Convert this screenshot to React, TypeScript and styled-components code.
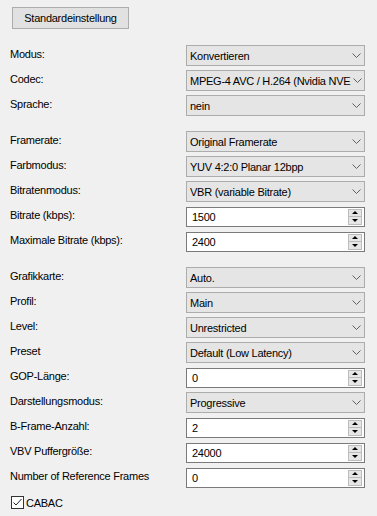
import React from "react";
import styled, { createGlobalStyle } from "styled-components";

const GlobalStyle = createGlobalStyle`
  html, body {
    margin: 0;
    padding: 0;
    background: #f0f0f0;
  }
  body {
    font-family: "Liberation Sans", Arial, sans-serif;
    font-size: 11px;
    letter-spacing: -0.25px;
    color: #000;
  }
`;

const Panel = styled.div`
  width: 377px;
  height: 516px;
  box-sizing: border-box;
  padding: 7px 12px 0 10px;
  overflow: hidden;
`;

const ResetButton = styled.button`
  margin-left: 2px;
  width: 117px;
  height: 22px;
  background: #e1e1e1;
  border: 1px solid #adadad;
  border-radius: 0;
  font: inherit;
  letter-spacing: inherit;
  color: #000;
  padding: 0;
`;

const Group = styled.div<{ $gap?: number }>`
  display: grid;
  grid-template-columns: 176px 179px;
  grid-auto-rows: 25px;
  margin-top: ${(p) => p.$gap ?? 11}px;
`;

const Label = styled.div`
  align-self: start;
  padding-top: 5px;
  white-space: nowrap;
`;

const Combo = styled.div`
  align-self: center;
  height: 21px;
  box-sizing: border-box;
  background: #e5e5e5;
  border: 1px solid #acacac;
  display: flex;
  align-items: center;
  padding: 0 0 0 3px;
  overflow: hidden;
`;

const ComboText = styled.span`
  flex: 1;
  white-space: nowrap;
`;

const Chevron = styled.svg`
  flex: none;
  width: 9px;
  height: 5px;
  margin: 0 3px 0 3px;
`;

const SpinBox = styled.div`
  align-self: center;
  height: 20px;
  box-sizing: border-box;
  background: #fff;
  border: 1px solid #7a7a7a;
  display: flex;
  align-items: stretch;
  padding: 1px 2px 1px 5px;
`;

const SpinValue = styled.span`
  flex: 1;
  display: flex;
  align-items: center;
`;

const SpinButtons = styled.div`
  width: 14px;
  display: flex;
  flex-direction: column;
`;

const SpinButton = styled.div`
  flex: 1;
  box-sizing: border-box;
  background: #e6e6e6;
  border: 1px solid #bcbcbc;
  display: flex;
  align-items: center;
  justify-content: center;
  & + & {
    border-top: none;
  }
`;

const Arrow = styled.div<{ $down?: boolean }>`
  width: 0;
  height: 0;
  border-left: 3px solid transparent;
  border-right: 3px solid transparent;
  ${(p) => (p.$down ? "border-top: 3px solid #000;" : "border-bottom: 3px solid #000;")}
`;

const CheckRow = styled.label`
  grid-column: 1 / span 2;
  display: flex;
  align-items: center;
  gap: 2px;
  padding-left: 1px;
`;

const CheckBox = styled.span`
  width: 13px;
  height: 13px;
  box-sizing: border-box;
  border: 1px solid #333;
  background: #fff;
  display: flex;
  align-items: center;
  justify-content: center;
`;

const Dropdown = ({ label, value }: { label: string; value: string }) => (
  <>
    <Label>{label}</Label>
    <Combo>
      <ComboText>{value}</ComboText>
      <Chevron viewBox="0 0 9 5">
        <path d="M0.5 0.5 L4.5 4.5 L8.5 0.5" fill="none" stroke="#606060" strokeWidth="1" />
      </Chevron>
    </Combo>
  </>
);

const Spinner = ({ label, value }: { label: string; value: string }) => (
  <>
    <Label>{label}</Label>
    <SpinBox>
      <SpinValue>{value}</SpinValue>
      <SpinButtons>
        <SpinButton>
          <Arrow />
        </SpinButton>
        <SpinButton>
          <Arrow $down />
        </SpinButton>
      </SpinButtons>
    </SpinBox>
  </>
);

export default function App() {
  return (
    <>
      <GlobalStyle />
      <Panel>
        <ResetButton>Standardeinstellung</ResetButton>
        <Group $gap={14}>
          <Dropdown label="Modus:" value="Konvertieren" />
          <Dropdown label="Codec:" value="MPEG-4 AVC / H.264 (Nvidia NVE" />
          <Dropdown label="Sprache:" value="nein" />
        </Group>
        <Group>
          <Dropdown label="Framerate:" value="Original Framerate" />
          <Dropdown label="Farbmodus:" value="YUV 4:2:0 Planar 12bpp" />
          <Dropdown label="Bitratenmodus:" value="VBR (variable Bitrate)" />
          <Spinner label="Bitrate (kbps):" value="1500" />
          <Spinner label="Maximale Bitrate (kbps):" value="2400" />
        </Group>
        <Group>
          <Dropdown label="Grafikkarte:" value="Auto." />
          <Dropdown label="Profil:" value="Main" />
          <Dropdown label="Level:" value="Unrestricted" />
          <Dropdown label="Preset" value="Default (Low Latency)" />
          <Spinner label="GOP-Länge:" value="0" />
          <Dropdown label="Darstellungsmodus:" value="Progressive" />
          <Spinner label="B-Frame-Anzahl:" value="2" />
          <Spinner label="VBV Puffergröße:" value="24000" />
          <Spinner label="Number of Reference Frames" value="0" />
          <CheckRow>
            <CheckBox>
              <svg width="11" height="11" viewBox="0 0 11 11">
                <path d="M1.5 5.5 L4 8 L9.5 2" fill="none" stroke="#222" strokeWidth="1" />
              </svg>
            </CheckBox>
            CABAC
          </CheckRow>
        </Group>
      </Panel>
    </>
  );
}
